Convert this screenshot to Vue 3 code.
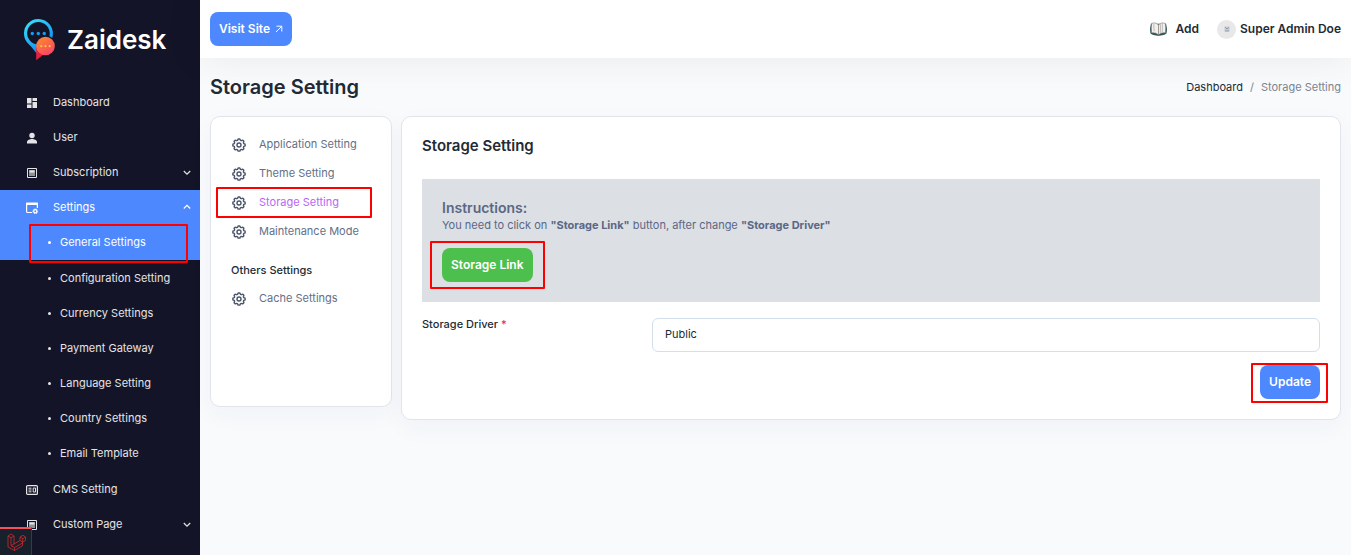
<script setup>
import { ref } from 'vue'

const subItems = [
  'General Settings',
  'Configuration Setting',
  'Currency Settings',
  'Payment Gateway',
  'Language Setting',
  'Country Settings',
  'Email Template',
]

const settingLinks = [
  { label: 'Application Setting' },
  { label: 'Theme Setting' },
  { label: 'Storage Setting', active: true },
  { label: 'Maintenance Mode' },
]
const otherLinks = [{ label: 'Cache Settings' }]
const groups = [
  { title: '', links: settingLinks },
  { title: 'Others Settings', links: otherLinks },
]

const driver = ref('Public')
</script>

<template>
  <div class="layout">
    <aside class="sidebar">
      <a class="brand" href="#">
        <svg class="brand-mark" viewBox="0 0 32 42" aria-hidden="true">
          <defs>
            <linearGradient id="ring" x1="0" y1="0" x2="0.6" y2="1">
              <stop offset="0" stop-color="#3be8fb" />
              <stop offset="1" stop-color="#0a86f4" />
            </linearGradient>
            <linearGradient id="bubble" x1="0.2" y1="0" x2="0.8" y2="1">
              <stop offset="0" stop-color="#fb8a2e" />
              <stop offset="1" stop-color="#f8406a" />
            </linearGradient>
          </defs>
          <path fill="url(#ring)" fill-rule="evenodd" d="M14.300 0A14.300 14.300 0 0 0 0 14.500c0 7 4.500 10.500 7.500 13.500l6 7.500V25.500A11.300 11.300 0 1 1 25.400 17l2.800 2A14.500 14.500 0 0 0 14.300 0Z" />
          <g fill="#139bf5">
            <circle cx="8.300" cy="14.500" r="1.700" /><circle cx="14.300" cy="14.500" r="1.700" /><circle cx="20.300" cy="14.500" r="1.700" />
          </g>
          <path fill="#e5203f" d="M12.200 28v13.300l8-6.300z" />
          <circle cx="21.500" cy="27" r="9.300" fill="url(#bubble)" />
          <g fill="#ffc53c">
            <circle cx="17.300" cy="27.200" r="1.100" /><circle cx="21.500" cy="27.200" r="1.100" /><circle cx="25.700" cy="27.200" r="1.100" />
          </g>
        </svg>
        <span>Zaidesk</span>
      </a>

      <nav class="menu">
        <a class="item" href="#">
          <svg class="icon" viewBox="0 0 12 12" aria-hidden="true"><path fill="currentColor" d="M1 1h4.500v5.500H1zM6.500 1H11v3H6.500zM1 7.500h4.500V11H1zM6.500 5H11v6H6.500z" /></svg>
          <span>Dashboard</span>
        </a>
        <a class="item" href="#">
          <svg class="icon" viewBox="0 0 12 12" aria-hidden="true"><circle cx="6" cy="3.500" r="2.700" fill="currentColor" /><path fill="currentColor" d="M1 11.500V10c0-2 3-3 5-3s5 1 5 3v1.500z" /></svg>
          <span>User</span>
        </a>
        <a class="item" href="#">
          <svg class="icon" viewBox="0 0 12 12" aria-hidden="true"><path fill="none" stroke="currentColor" d="M1.500 1.500h9v9h-9z" /><path fill="currentColor" fill-opacity=".6" d="M3 3h6v6H3z" /><path fill="currentColor" d="M3.500 3.500h5v2h-5z" /></svg>
          <span>Subscription</span>
          <svg class="chevron" viewBox="0 0 8 8" aria-hidden="true"><path d="M.8 3 4 6.200 7.200 3" /></svg>
        </a>
        <a class="item current" href="#">
          <svg class="icon" viewBox="0 0 12 12" aria-hidden="true"><path fill="none" stroke="currentColor" stroke-width="1.200" d="M6 10.500H1.500Q.6 10.500.6 9.600V1.500h10.800V6" /><path fill="currentColor" d="M.2.500h11.600V3H.2z" /><circle cx="9.300" cy="9.300" r="1.600" fill="none" stroke="currentColor" stroke-width="1.300" /><circle cx="9.300" cy="9.300" r="2.400" fill="none" stroke="currentColor" stroke-dasharray="1 0.880" /></svg>
          <span>Settings</span>
          <svg class="chevron" viewBox="0 0 8 8" aria-hidden="true"><path d="M.8 5.500 4 2.300 7.200 5.500" /></svg>
        </a>
        <div class="submenu">
          <a v-for="(s, i) in subItems" :key="s" class="item sub" :class="{ current: i === 0 }" href="#">
            <i class="dot"></i><span>{{ s }}</span>
            <b v-if="i === 0" class="mark mark-general"></b>
          </a>
        </div>
        <a class="item" href="#">
          <svg class="icon" viewBox="0 0 12 12" aria-hidden="true"><rect x=".6" y="1.600" width="10.800" height="8.800" rx="1" fill="none" stroke="currentColor" stroke-width="1.200" /><path fill="none" stroke="currentColor" d="M2.500 4.200h3M2.500 6h3M2.500 7.800h3M7.200 4h2.300v4H7.200z" /></svg>
          <span>CMS Setting</span>
        </a>
        <a class="item" href="#">
          <svg class="icon" viewBox="0 0 12 12" aria-hidden="true"><path fill="none" stroke="currentColor" d="M1.500 1.500h9v9h-9z" /><path fill="currentColor" fill-opacity=".6" d="M3 3h6v6H3z" /><path fill="currentColor" d="M3.500 3.500h5v2h-5z" /></svg>
          <span>Custom Page</span>
          <svg class="chevron" viewBox="0 0 8 8" aria-hidden="true"><path d="M.8 3 4 6.200 7.200 3" /></svg>
        </a>
      </nav>
    </aside>

    <div class="page">
      <header class="topbar">
        <a class="btn blue" href="#">Visit Site
          <svg class="arrow" viewBox="0 0 8 8" aria-hidden="true"><path d="M1 7 6.500 1.500M1.500 1.200h5.300v5.300" /></svg>
        </a>
        <div class="account">
          <a class="add" href="#">
            <svg class="book" viewBox="0 0 20 16" aria-hidden="true">
              <path fill="#2d5357" d="M2 2.500Q.5 8 1.500 12.500q1 2 7.500 2.500h2q6.500-.5 7.500-2.500 1-4.500-.5-10z" />
              <path fill="#f1f0ed" stroke="#77716c" stroke-width=".6" d="M10 3.500Q6.500.4 2.800 2 2 7.500 2.700 12q4.300-.6 7.300 2zM10 3.500Q13.500.4 17.200 2q.8 5.500.1 10-4.300-.6-7.300 2z" />
              <path fill="none" stroke="#a7a39e" stroke-width=".7" d="M10 4v9.500M12 3v9M14 2v9.500M5 2.500l.4 8" />
            </svg>
            <span>Add</span>
          </a>
          <a class="user" href="#">
            <span class="avatar"><svg viewBox="0 0 6 6" aria-hidden="true"><path fill="#c3cad4" d="M.5.500h5v5h-5z" /><path fill="none" stroke="#8797a9" stroke-width=".8" d="m1 1 2 2 2-1.500M1 5h4" /></svg></span>
            <span>Super Admin Doe</span>
          </a>
        </div>
      </header>

      <main class="content">
        <div class="heading">
          <h1>Storage Setting</h1>
          <nav class="crumbs" aria-label="Breadcrumb"><a href="#">Dashboard</a><span>/</span><span>Storage Setting</span></nav>
        </div>

        <div class="columns">
          <section class="card side">
            <template v-for="g in groups" :key="g.title">
              <h3 v-if="g.title">{{ g.title }}</h3>
              <a v-for="l in g.links" :key="l.label" class="link" :class="{ active: l.active }" href="#">
                <svg class="gear" viewBox="0 0 16 16" aria-hidden="true">
                  <path d="M6.400 2.600 7 1.100h2l.6 1.500 1.100.5 1.600-.6 1.300 1.300-.6 1.600.5 1.100 1.500.6v1.900l-1.500.6-.5 1.100.6 1.500-1.400 1.400-1.500-.6-1.100.5-.6 1.500H7l-.6-1.500-1.100-.5-1.500.6-1.400-1.400.6-1.500-.5-1.100L1 9V7.100l1.500-.6.500-1.100-.6-1.600 1.300-1.300 1.600.6z" />
                  <circle cx="8" cy="8" r="2.300" />
                </svg>
                <span>{{ l.label }}</span>
                <b v-if="l.active" class="mark mark-storage"></b>
              </a>
            </template>
          </section>

          <section class="card panel">
            <h2>Storage Setting</h2>
            <div class="notice">
              <h4>Instructions:</h4>
              <p>You need to click on <strong>"Storage Link"</strong> button, after change <strong>"Storage Driver"</strong></p>
              <div class="marked">
                <button class="btn green" type="button">Storage Link</button>
                <b class="mark mark-link"></b>
              </div>
            </div>
            <form @submit.prevent>
              <div class="field">
                <label for="driver">Storage Driver <em>*</em></label>
                <select id="driver" v-model="driver"><option>Public</option></select>
              </div>
              <div class="actions">
                <div class="marked">
                  <button class="btn blue" type="submit">Update</button>
                  <b class="mark mark-update"></b>
                </div>
              </div>
            </form>
          </section>
        </div>
      </main>
    </div>

    <button class="debug" type="button" aria-label="Debug bar">
      <svg viewBox="0 0 20 20" aria-hidden="true"><path d="M2 4 5 2l3 2v8l6-3.500V5l3-1.700L19.500 5v3.500l-3 1.700v3.600L8.500 18.500 2 15zM2 4l3 1.700L8 4M5 5.700v8l3.500 1.800 8-4.500M8.500 15.500v3M5 13.700 8 12M14 5l2.800 1.700L19.500 5M16.700 6.700v3.500L14 8.500" /></svg>
    </button>
  </div>
</template>

<style>
body {
  margin: 0;
  background: #f9fafc;
}
</style>

<style scoped>
* {
  box-sizing: border-box;
}
.layout {
  display: flex;
  height: 100vh;
  overflow: hidden;
  font-family: Inter, 'Liberation Sans', sans-serif;
  font-size: 11px;
  line-height: 16px;
  color: #212b36;
}
a {
  color: inherit;
  text-decoration: none;
}
h1, h2, h3, h4, p {
  margin: 0;
}
.sidebar {
  flex: none;
  width: 200px;
  background: #141428;
  color: #e4e4e6;
  overflow: hidden;
}
.brand {
  display: flex;
  align-items: center;
  gap: 11px;
  height: 85px;
  padding: 0 0 6px 24px;
  font-size: 26px;
  line-height: 32px;
  font-weight: 600;
  color: #fff;
}
.brand-mark {
  width: 32px;
  height: 42px;
}
.item {
  position: relative;
  display: flex;
  align-items: center;
  height: 35px;
  padding: 0 9px 2px 26px;
}
.current {
  background: #4d88ff;
  color: #fff;
}
.icon {
  width: 12px;
  height: 12px;
  margin: 2px 15px 0 0;
}
.chevron {
  width: 8px;
  height: 8px;
  margin-left: auto;
  fill: none;
  stroke: currentColor;
  stroke-width: 1.2;
}
.submenu {
  padding-bottom: 1px;
}
.sub {
  padding-left: 48px;
}
.sub.current {
  margin-bottom: 1px;
}
.dot {
  width: 3px;
  height: 3px;
  margin: 1px 9px 0 0;
  border-radius: 50%;
  background: currentColor;
}
.mark {
  position: absolute;
  border: 2px solid #f00;
  border-radius: 1px;
  pointer-events: none;
}
.mark-general {
  inset: -1px 12px -3px 29px;
}
.mark-storage {
  inset: 0 -1px -2px -15px;
}
.mark-link {
  inset: -7px -12px -7px -12px;
}
.mark-update {
  inset: -2px -8px -4px -9px;
}
.page {
  flex: 1;
  min-width: 0;
}
.topbar {
  position: relative;
  display: flex;
  align-items: center;
  justify-content: space-between;
  height: 58px;
  padding: 0 10px;
  background: #fff;
  box-shadow: 0 0 40px rgba(0, 0, 0, 0.07);
}
.btn {
  display: flex;
  align-items: center;
  gap: 5px;
  height: 34px;
  padding: 0 9px;
  border: 0;
  border-radius: 8px;
  font: 600 12px/16px Inter, 'Liberation Sans', sans-serif;
  color: #fff;
}
.blue {
  background: #4d88ff;
}
.green {
  background: #4dbf4d;
}
.arrow {
  width: 8px;
  height: 8px;
  fill: none;
  stroke: currentColor;
}
.account, .add, .user {
  display: flex;
  align-items: center;
  font-size: 12px;
  font-weight: 600;
}
.account {
  gap: 18px;
}
.add {
  gap: 8px;
}
.user {
  gap: 4px;
}
.book {
  width: 19px;
  height: 16px;
}
.avatar {
  display: grid;
  place-items: center;
  width: 19px;
  height: 19px;
  border-radius: 50%;
  background: #e8e8e8;
}
.avatar svg {
  width: 6px;
  height: 6px;
}
.content {
  padding: 15px 10px;
}
.heading {
  display: flex;
  align-items: center;
  justify-content: space-between;
  height: 28px;
  margin-bottom: 15px;
}
h1 {
  font-size: 20px;
  line-height: 28px;
  font-weight: 600;
}
.crumbs {
  display: flex;
  gap: 7px;
}
.crumbs span {
  color: #7c8591;
}
.columns {
  display: grid;
  grid-template-columns: 182px minmax(0, 1fr);
  align-items: start;
  gap: 9px;
}
.card {
  background: #fff;
  border: 1px solid #e1e4ea;
  border-radius: 10px;
  box-shadow: 0 8px 24px rgba(40, 60, 100, 0.04);
}
.side {
  min-height: 291px;
  padding: 12px 20px;
}
.link {
  position: relative;
  display: flex;
  align-items: center;
  gap: 13px;
  height: 29px;
  padding-left: 1px;
  color: #637087;
}
.active {
  color: #b867f5;
}
.gear {
  width: 14px;
  height: 14px;
  margin-top: 2px;
  fill: none;
  stroke: #4b556a;
  stroke-width: 1.6;
  stroke-linejoin: round;
}
h3 {
  padding: 17px 0 5px;
  font-size: 11px;
  line-height: 16px;
  font-weight: 500;
}
.panel {
  padding: 19px 20px 20px;
}
h2 {
  margin-bottom: 23px;
  font-size: 15px;
  line-height: 20px;
  font-weight: 600;
}
.notice {
  padding: 20px;
  margin-bottom: 16px;
  background: #dcdfe4;
  color: #5b6784;
}
h4 {
  font-size: 14px;
  line-height: 18px;
  font-weight: 600;
}
.notice p {
  margin-bottom: 15px;
}
.marked {
  position: relative;
  width: max-content;
}
.field {
  display: grid;
  grid-template-columns: 230px minmax(0, 1fr);
  align-items: start;
}
label {
  line-height: 12px;
  font-weight: 500;
}
em {
  font-style: normal;
  color: #e02c3c;
}
select {
  height: 34px;
  padding: 0 12px 2px;
  appearance: none;
  border: 1px solid #d3dfec;
  border-radius: 6px;
  background: #fff;
  font: 400 11px/16px Inter, 'Liberation Sans', sans-serif;
  color: #212b36;
}
.actions {
  display: flex;
  justify-content: flex-end;
  margin-top: 13px;
}
.debug {
  position: fixed;
  left: 0;
  bottom: 0;
  display: grid;
  place-items: center;
  width: 32px;
  height: 28px;
  padding: 0;
  border: solid #343a46;
  border-width: 2px 1px 0 0;
  border-top-color: #f4515c;
  background: #18202b;
}
.debug svg {
  width: 20px;
  height: 20px;
  fill: none;
  stroke: #d4282c;
  stroke-width: 0.8;
}
</style>
